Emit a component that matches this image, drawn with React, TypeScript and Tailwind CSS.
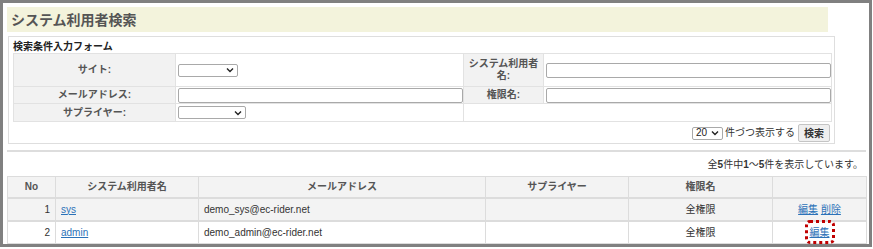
import React from "react";

const font = { fontFamily: '"Liberation Sans", "Noto Sans CJK JP", sans-serif' };

function Select({ w, label }: { w: string; label?: string }) {
  return (
    <div
      className={`${w} h-[13px] border border-[#a9a9a9] rounded-[2px] bg-white flex items-center justify-between pl-[3px] pr-[3px] text-[10px] leading-none text-[#222]`}
    >
      <span>{label ?? ""}</span>
      <svg width="8" height="6" viewBox="0 0 8 6" className="shrink-0">
        <path d="M1 1.5 L4 4.5 L7 1.5" fill="none" stroke="#222" strokeWidth="1.4" />
      </svg>
    </div>
  );
}

function Input() {
  return <div className="w-[285px] h-[15px] border border-[#a9a9a9] rounded-[2px] bg-white" />;
}

export default function App() {
  const label = "bg-[#f2f2f2] border border-[#e2e2e2] text-center font-bold text-[#555] text-[10px] leading-[12px] p-0";
  const value = "border border-[#e2e2e2] p-0 pl-[2px] bg-white";
  const th = "border border-[#dcdcdc] bg-[#f3f3f3] text-[#555] font-bold text-[10px] text-center p-0";
  const td = "border border-[#dcdcdc] border-t-2 text-[10px] text-[#333] p-0";
  const link = "text-[#2c72b8] underline";
  return (
    <div className="w-[873px] h-[249px] bg-white" style={font}>
      <div className="w-[872px] h-[247px] border-[3px] border-[#808080] overflow-hidden bg-white">
        {/* title */}
        <div className="mt-[4px] ml-[4px] w-[821px] h-[25px] bg-[#f3f3dc] flex items-center pl-[4px]">
          <span className="text-[14px] font-bold text-[#555] leading-none">システム利用者検索</span>
        </div>
        {/* form panel */}
        <div className="mt-[4px] ml-[5px] w-[827px] h-[108px] border border-[#dedede] pt-[4px] pl-[4px]">
          <div className="h-[12px] text-[10px] leading-[12px] font-bold text-[#222]">検索条件入力フォーム</div>
          <table className="w-[818px] table-fixed border-collapse">
            <colgroup>
              <col className="w-[162px]" />
              <col className="w-[288px]" />
              <col className="w-[80px]" />
              <col className="w-[288px]" />
            </colgroup>
            <tbody>
              <tr className="h-[33px]">
                <td className={label}>サイト:</td>
                <td className={value}>
                  <Select w="w-[60px]" />
                </td>
                <td className={label}>
                  システム利用者
                  <br />
                  名:
                </td>
                <td className={value}>
                  <Input />
                </td>
              </tr>
              <tr className="h-[17px]">
                <td className={label}>メールアドレス:</td>
                <td className={value}>
                  <Input />
                </td>
                <td className={label}>権限名:</td>
                <td className={value}>
                  <Input />
                </td>
              </tr>
              <tr className="h-[18px]">
                <td className={label}>サプライヤー:</td>
                <td className={value}>
                  <Select w="w-[68px]" />
                </td>
                <td className={value} colSpan={2}></td>
              </tr>
            </tbody>
          </table>
          <div className="w-[818px] h-[22px] flex items-center justify-end pr-[1px]">
            <Select w="w-[31px]" label="20" />
            <span className="ml-[2px] text-[10px] text-[#333] leading-none">件づつ表示する</span>
            <div className="ml-[3px] w-[32px] h-[18px] border border-[#c4c4c4] rounded-[2px] bg-[#efefef] flex items-center justify-center text-[10px] font-bold text-[#333]">
              検索
            </div>
          </div>
        </div>
        {/* hr */}
        <div className="mt-[6px] ml-[4px] w-[859px] h-[2px] bg-[#dddddd]" />
        {/* count */}
        <div className="ml-[4px] w-[859px] h-[24px] flex items-center justify-end pr-[3px] pt-[2px] text-[10px] text-[#333] leading-none">
          全<b>5</b>件中<b>1</b>〜<b>5</b>件を表示しています。
        </div>
        {/* results */}
        <table className="ml-[4px] w-[859px] table-fixed border-collapse">
          <colgroup>
            <col className="w-[48px]" />
            <col className="w-[143px]" />
            <col className="w-[287px]" />
            <col className="w-[143px]" />
            <col className="w-[144px]" />
            <col className="w-[94px]" />
          </colgroup>
          <thead>
            <tr className="h-[21px]">
              <th className={th}>No</th>
              <th className={th}>システム利用者名</th>
              <th className={th}>メールアドレス</th>
              <th className={th}>サプライヤー</th>
              <th className={th}>権限名</th>
              <th className={th}></th>
            </tr>
          </thead>
          <tbody>
            <tr className="h-[23px] bg-[#f3f3f3]">
              <td className={`${td} text-right pr-[5px]`}>1</td>
              <td className={`${td} pl-[5px]`}>
                <span className={link}>sys</span>
              </td>
              <td className={`${td} pl-[5px]`}>demo_sys@ec-rider.net</td>
              <td className={td}></td>
              <td className={`${td} text-center`}>全権限</td>
              <td className={`${td} text-center`}>
                <span className={link}>編集</span> <span className={link}>削除</span>
              </td>
            </tr>
            <tr className="h-[23px] bg-white">
              <td className={`${td} text-right pr-[5px]`}>2</td>
              <td className={`${td} pl-[5px]`}>
                <span className={link}>admin</span>
              </td>
              <td className={`${td} pl-[5px]`}>demo_admin@ec-rider.net</td>
              <td className={td}></td>
              <td className={`${td} text-center`}>全権限</td>
              <td className={`${td} text-center`}>
                <span className="relative inline-block">
                  <span className={link}>編集</span>
                  <span className="absolute -left-[5px] -right-[5px] -top-[5px] -bottom-[4px] border-[3px] border-dotted border-[#c00000] rounded-[5px]" />
                </span>
              </td>
            </tr>
          </tbody>
        </table>
      </div>
    </div>
  );
}
